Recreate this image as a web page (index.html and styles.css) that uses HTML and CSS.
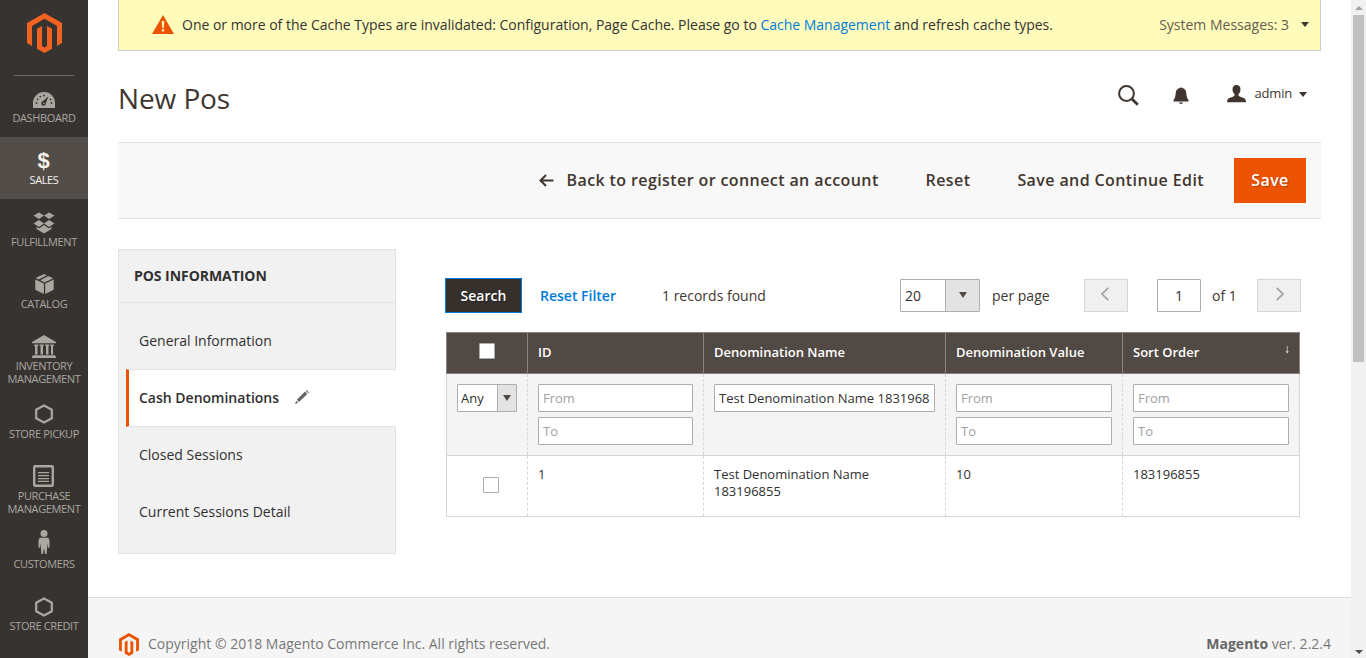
FILE: index.html
```html
<!DOCTYPE html>
<html lang="en">
<head>
<meta charset="utf-8">
<title>New Pos / Magento Admin</title>
<link rel="stylesheet" href="styles.css">
</head>
<body>
<svg class="defs" width="0" height="0">
  <symbol id="logo" viewBox="0 0 35 40">
    <path d="M17.5 0 35 10v20l-5 2.900V12.900L17.500 5.700 5 12.900v20L0 30V10z"/>
    <path d="M15 12.900v20l2.500 1.500 2.500-1.500v-20l5 2.900v20L17.500 40 10 35.800v-20z"/>
  </symbol>
  <symbol id="hex" viewBox="0 0 18 20">
    <path d="M9 1.500 16.800 5.700v8.600L9 18.500 1.200 14.300V5.700z" fill="none" stroke="currentColor" stroke-width="2.200"/>
  </symbol>
</svg>
<div class="app">
  <nav class="menu">
    <a class="menu-logo"><svg width="35" height="40"><use href="#logo"/></svg></a>
    <a class="item"><span class="ico"><svg width="22" height="16" viewBox="0 0 22 16"><path d="M0 16v-5a11 11 0 0 1 22 0v5z"/><g fill="#373330"><circle cx="3.500" cy="11" r=".9"/><circle cx="4.600" cy="7.300" r=".9"/><circle cx="7.300" cy="4.600" r=".9"/><circle cx="11" cy="3.500" r=".9"/><circle cx="18.500" cy="11" r=".9"/><circle cx="17.600" cy="7.300" r=".9"/><path d="M15.500 4.200 12.800 11a2.300 2.300 0 1 1-3-1.800z"/></g><circle cx="10.800" cy="11.500" r=".8"/></svg></span><span>Dashboard</span></a>
    <a class="item active"><span class="ico"><span class="dollar">$</span></span><span>Sales</span></a>
    <a class="item"><span class="ico"><svg width="22" height="22" viewBox="0 0 22 22"><path d="m6 .5 5 3-5 3.500-5.500-3.500zM16 .5l5.500 3L16 7l-5-3.500zM6 8l5 3.500L6 15 .5 11.500zM16 8l5.500 3.500L16 15l-5-3.500zM11 13l3.500 2.500 1.500.8 2.500-1.300v2L11 21.500 3.500 17v-2L6 16.300l1.500-.8z"/></svg></span><span>Fulfillment</span></a>
    <a class="item catalog"><span class="ico"><svg width="19" height="20" viewBox="0 0 19 20"><path d="M9 0 11.800 1.300 3.700 5.400.7 4zM13.300 1.900 18.300 4.200 9.500 8.400 5.300 6.300zM.3 5.500 8.900 9.600V20L.3 15.800zM18.700 5.500v10.300L10.200 20V9.600z"/></svg></span><span>Catalog</span></a>
    <a class="item"><span class="ico"><svg width="24" height="23" viewBox="0 0 24 23"><path d="M12 0 24 7v1.300H0V7zM2 9.500h4.500v1.300h-1v8.700H3v-8.700H2zM7.500 9.500H12v1.300h-1v8.700H8.500v-8.700h-1zM13 9.500h4.500v1.300h-1v8.700H14v-8.700h-1zM18.300 9.500H22v1.300h-1v8.700h-2v-8.700h-.7zM1 20.300h22v1h1V23H0v-1.700h1z"/></svg></span><span>Inventory Management</span></a>
    <a class="item pickup"><span class="ico"><svg width="18" height="20"><use href="#hex"/></svg></span><span>Store Pickup</span></a>
    <a class="item purchase"><span class="ico"><svg width="21" height="22" viewBox="0 0 21 22"><rect x="1.200" y="1.200" width="18.600" height="19.600" rx="1" fill="none" stroke="currentColor" stroke-width="2.400"/><path d="M5 7h11v1.300H5zM5 10h11v1.300H5zM5 13h11v1.300H5zM5 15.700h11V17H5z"/></svg></span><span>Purchase Management</span></a>
    <a class="item customers"><span class="ico"><svg width="12" height="24" viewBox="0 0 12 24"><circle cx="6" cy="3.500" r="3.500"/><path d="M2.500 7.800h7Q11.500 8 11.500 11v6.500l-1.300.5-.7-4.500-.9 10.500H7l-1-6-1 6H3.400l-.9-10.500L1.800 18l-1.300-.5V11q0-3 2-3.200z"/></svg></span><span>Customers</span></a>
    <a class="item"><span class="ico"><svg width="18" height="20"><use href="#hex"/></svg></span><span>Store Credit</span></a>
  </nav>

  <main class="page">
    <section class="notice">
      <svg width="22" height="19" viewBox="0 0 22 19"><path d="M11 0 22 19H0z" fill="#eb5202"/><path d="M9.700 6h2.600l-.5 7h-1.600zM9.800 14.300h2.400v2.200H9.800z" fill="#fffbbb"/></svg>
      <p class="notice-text">One or more of the Cache Types are invalidated: Configuration, Page Cache. Please go to <a>Cache Management</a> and refresh cache types.</p>
      <span class="notice-count">System Messages: 3</span><i class="caret"></i>
    </section>

    <header class="title-row">
      <h1>New Pos</h1>
      <svg class="search-ico" width="21" height="21" viewBox="0 0 21 21"><circle cx="8.500" cy="8.500" r="7.400" stroke-width="2"/><path d="m13.500 13.500 6.300 6.300" stroke-width="2.800"/></svg>
      <svg class="bell" width="16" height="18" viewBox="0 0 16 18"><path d="M7 1q1-1.500 2 0 4 .8 4.300 5 .2 5 2.200 7v1.500H.5V13q2-2 2.200-7Q3 1.800 7 1zM5.800 15.500h4.400Q8 18.500 5.800 15.500z"/></svg>
      <svg class="user" width="19" height="18" viewBox="0 0 19 18"><path d="M5.500 4.500Q5.500 0 9.500 0t4 4.500Q13.500 8 11.500 9.300v1.500q1 1.200 4.500 2 3 .8 3 4.400H0q0-3.600 3-4.400 3.500-.8 4.500-2V9.300Q5.500 8 5.500 4.500z"/></svg>
      <span class="admin">admin</span><i class="caret"></i>
    </header>

    <div class="actions">
      <a class="back"><svg width="15" height="13" viewBox="0 0 15 13"><path d="M14.500 6.500H1.800M7 1 1.500 6.500 7 12"/></svg>Back to register or connect an account</a>
      <a class="reset">Reset</a>
      <a class="continue">Save and Continue Edit</a>
      <button class="save">Save</button>
    </div>

    <div class="columns">
      <aside class="tabs">
        <h2>POS INFORMATION</h2>
        <ul>
          <li>General Information</li>
          <li class="current">Cash Denominations<svg width="14" height="14" viewBox="0 0 14 14"><path d="m10.800.8.8-.8L14 2.400l-.8.800zM10 1.600 12.400 4 4 12 1.800 9.800zM1.200 10.800l2 2L0 14z"/></svg></li>
          <li>Closed Sessions</li>
          <li>Current Sessions Detail</li>
        </ul>
      </aside>

      <section class="grid">
        <div class="toolbar">
          <button class="search">Search</button>
          <a class="reset-filter">Reset Filter</a>
          <span class="records">1 records found</span>
          <div class="select limit"><span>20</span><b><i></i></b></div>
          <span class="per">per page</span>
          <button class="pager"><svg width="8" height="14" viewBox="0 0 8 14"><path d="M7.300.8 1 7l6.300 6.200"/></svg></button>
          <span class="page-no">1</span>
          <span class="of">of 1</span>
          <button class="pager next"><svg width="8" height="14" viewBox="0 0 8 14"><path d="M.7.800 7 7 .7 13.200"/></svg></button>
        </div>
        <table>
          <colgroup><col class="c1"><col class="c2"><col class="c3"><col class="c4"><col class="c5"></colgroup>
          <thead>
            <tr class="heads"><th class="pick"><span class="check"></span></th><th>ID</th><th>Denomination Name</th><th>Denomination Value</th><th><div class="sorted">Sort Order<span>↓</span></div></th></tr>
            <tr class="filters">
              <td><div class="select any"><span>Any</span><b><i></i></b></div></td>
              <td><input placeholder="From"><input placeholder="To"></td>
              <td><input value="Test Denomination Name 183196855"></td>
              <td><input placeholder="From"><input placeholder="To"></td>
              <td><input placeholder="From"><input placeholder="To"></td>
            </tr>
          </thead>
          <tbody>
            <tr><td class="pick"><span class="check"></span></td><td>1</td><td>Test Denomination Name 183196855</td><td>10</td><td>183196855</td></tr>
          </tbody>
        </table>
      </section>
    </div>

    <footer class="footer">
      <svg width="20" height="23"><use href="#logo"/></svg>
      <span>Copyright © 2018 Magento Commerce Inc. All rights reserved.</span>
      <span class="version"><strong>Magento</strong> ver. 2.2.4</span>
    </footer>
  </main>

  <div class="scrollbar"><i class="up"></i><div class="thumb"></div><i class="down"></i></div>
</div>
</body>
</html>
```
FILE: styles.css
```css
* { box-sizing: border-box; }
body, h1, h2, p, ul { margin: 0; padding: 0; }
body { font-family: "Open Sans", "Noto Sans", sans-serif; font-size: 14px; line-height: 19px; color: #41362f; background: #fff; overflow: hidden; }
button, input { font: inherit; margin: 0; }
svg { display: block; fill: currentColor; flex: none; }
.defs { position: absolute; }
.app { display: flex; height: 658px; overflow: hidden; }

.menu { width: 88px; flex: none; background: #373330; color: #aaa6a0; height: 658px; }
.menu-logo { display: flex; height: 76px; margin: 0 14px; padding: 13px 0 0 13px; border-bottom: 1px solid #736963; color: #f26322; }
.item { display: flex; flex-direction: column; align-items: center; min-height: 62px; padding: 11px 5px 6px; font-size: 11px; line-height: 13px; letter-spacing: -.37px; text-align: center; text-transform: uppercase; }
.menu-logo + .item { margin-top: -1px; }
.ico { height: 25px; display: flex; align-items: center; }
.item:nth-child(2) .ico { padding-top: 2px; }
.customers .ico { padding-bottom: 5px; }
.catalog .ico, .pickup .ico { padding-bottom: 2px; }
.purchase .ico { padding: 0 2px 2px 0; }
.item.active { background: #524d49; color: #f7f3eb; }
.dollar { font-family: "Liberation Sans", sans-serif; font-size: 22px; font-weight: 700; line-height: 25px; padding: 0 1px 1px 0; }

.page { flex: 1; min-width: 0; display: flex; flex-direction: column; }
.caret { border: 4px solid transparent; border-top: 5px solid #41362f; border-bottom: 0; width: 0; }
.notice { display: flex; align-items: center; height: 51px; margin: 0 30px; padding: 0 11px 1px 33px; background: #fffbbb; border: 1px solid #ccc; border-top: 0; color: #333; }
.notice-text { margin-left: 8px; flex: 1; white-space: nowrap; letter-spacing: -.012px; }
.notice a { color: #007bdb; }
.notice-count { color: #665c50; margin-right: 12px; }

.title-row { display: flex; align-items: center; height: 91px; margin: 0 30px; padding: 0 14px 5px 0; }
h1 { flex: 1; font-size: 28px; font-weight: 400; line-height: 38px; padding-top: 8px; letter-spacing: -.1px; }
.search-ico { fill: none; stroke: currentColor; margin-top: 2px; }
.bell { margin: 3px 0 0 34px; }
.user { margin-left: 38px; }
.admin { font-size: 13px; margin: 0 7px 1px 9px; letter-spacing: -.2px; }

.actions { display: flex; align-items: center; justify-content: flex-end; height: 77px; margin: 0 30px; padding-right: 15px; background: #f8f8f8; border: solid #e3e3e3; border-width: 1px 0; font-size: 16px; font-weight: 600; letter-spacing: .4px; }
.back { display: flex; align-items: center; gap: 13px; }
.back svg { fill: none; stroke: currentColor; stroke-width: 2; }
.reset, .continue { margin-left: 47px; }
.save { margin-left: 30px; width: 72px; height: 45px; padding: 0; border: 0; background: #eb5202; color: #fff; letter-spacing: .4px; text-shadow: 1px 1px 0 rgba(0,0,0,.25); }

.columns { display: flex; height: 378px; padding: 30px 30px 0; }
.tabs { width: 278px; height: 305px; flex: none; background: #f1f1f1; border: 1px solid #e3e3e3; color: #303030; }
.tabs h2 { height: 53px; padding: 16px 15px; border-bottom: 1px solid #e3e3e3; font-size: 14px; line-height: 19px; font-weight: 700; letter-spacing: -.05px; }
.tabs ul { list-style: none; padding: 9px 0 0 7px; }
.tabs li { display: flex; align-items: center; height: 57px; padding-left: 13px; }
.tabs .current { height: 58px; margin: 0 -1px -1px 0; padding: 0 0 2px 10px; background: #fff; border: solid #e3e3e3; border-width: 1px 0; border-left: 3px solid #eb5202; font-weight: 600; }
.current svg { margin-left: 16px; color: #666; }

.grid { margin-left: 49px; width: 856px; }
.toolbar { display: flex; align-items: center; height: 36px; margin-top: 28px; }
.search { width: 77px; height: 35px; padding: 0; background: #35302c; border: 1px solid #007bdb; color: #fff; font-weight: 600; text-shadow: 1px 1px 0 rgba(0,0,0,.3); }
.reset-filter { width: 140px; padding-left: 18px; color: #007bdb; font-weight: 600; white-space: nowrap; }
.records { flex: 1; }
.select { display: flex; border: 1px solid #adadad; border-radius: 1px; background: #fff; color: #303030; }
.select span { flex: 1; padding-left: 4px; align-self: center; }
.select b { display: flex; align-items: center; justify-content: center; background: #e3e3e3; border-left: 1px solid #adadad; }
.select i { border: 4px solid transparent; border-top: 6px solid #514943; border-bottom: 0; }
.limit { width: 80px; height: 33px; }
.limit b { width: 34px; }
.per { width: 104px; padding-left: 12px; }
.pager { display: flex; align-items: center; justify-content: center; width: 44px; height: 33px; padding: 0 2px 3px 0; background: #f0f0f0; border: 1px solid #d6d6d6; }
.pager.next { padding: 0 0 3px 2px; }
.pager svg { fill: none; stroke: #a5a19e; stroke-width: 1.7; }
.page-no { width: 44px; height: 33px; margin-left: 29px; border: 1px solid #adadad; border-radius: 1px; text-align: center; line-height: 32px; color: #303030; }
.of { width: 56px; padding-left: 11px; }

table { table-layout: fixed; width: 853px; margin: 19px 0 0 1px; border-collapse: collapse; font-size: 13px; line-height: 17px; color: #303030; }
.c1 { width: 81px; } .c2 { width: 176px; } .c3 { width: 242px; } .c4 { width: 177px; } .c5 { width: 177px; }
th { height: 41px; padding: 0 10px 1px; background: #514943; border: 1px solid #8a837f; color: #fff; text-align: left; font-weight: 600; }
td { padding: 10px; vertical-align: top; border: 1px dashed #d6d6d6; border-top: 0; border-bottom: 1px solid #d6d6d6; }
td:first-child { border-left-style: solid; }
td:last-child { border-right-style: solid; }
.filters td { height: 82px; background: #f4f4f4; }
tbody td { height: 61px; }
.sorted { display: flex; justify-content: space-between; }
.sorted span { position: relative; top: -3px; left: 1px; font-family: "Liberation Sans", sans-serif; font-size: 12px; font-weight: 400; }
.check { display: block; width: 16px; height: 16px; border: 1px solid #adadad; background: #fff; margin: 0 auto; border-radius: 1px; }
th .check { margin-top: -3px; }
td .check { margin: 11px 0 0 26px; }
input { display: block; width: 100%; height: 28px; padding: 0 4px; border: 1px solid #adadad; border-radius: 1px; background: #fff; color: #303030; font-size: 13px; outline: 0; }
input + input { margin-top: 5px; }
input::placeholder { color: #a1a1a1; }
.any { height: 28px; width: 60px; }
.any span { padding-left: 3px; }
.any b { width: 19px; }

.footer { flex: 1; display: flex; align-items: flex-start; padding: 35px 20px 0 31px; background: #f5f5f5; border-top: 1px solid #dcdcdc; color: #777; }
.footer span { margin: 1px 0 0 9px; }
.footer .version { margin-left: auto; }
.footer svg { color: #eb5202; }
.version strong { color: #666; }

.scrollbar { display: flex; flex-direction: column; align-items: center; width: 15px; background: #f1f1f1; padding: 6px 0 4px; }
.scrollbar i { border: 4px solid transparent; }
.scrollbar .up { border-top: 0; border-bottom-color: #a3a3a3; }
.scrollbar .down { border-bottom: 0; border-top-color: #505050; margin-top: auto; }
.thumb { width: 11px; height: 347px; margin-top: 5px; background: #c1c1c1; }
```
